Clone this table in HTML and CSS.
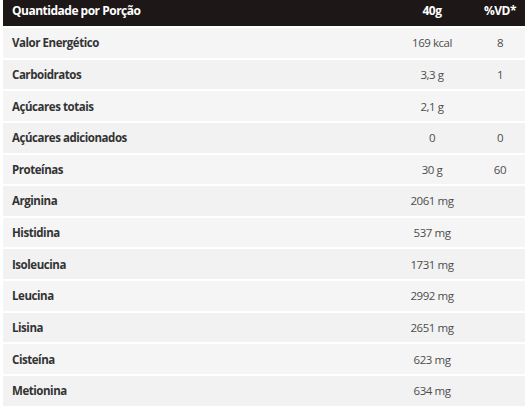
FILE: index.html
```html
<!DOCTYPE html>
<html lang="pt">
<head>
<meta charset="utf-8">
<link rel="stylesheet" href="styles.css">
</head>
<body>
<div class="table">
  <div class="row head">
    <div class="c-label">Quantidade por Porção</div>
    <div class="c-qty">40g</div>
    <div class="c-vd">%VD*</div>
  </div>
  <div class="row"><div class="c-label">Valor Energético</div><div class="c-qty">169 kcal</div><div class="c-vd">8</div></div>
  <div class="row alt"><div class="c-label">Carboidratos</div><div class="c-qty">3,3 g</div><div class="c-vd">1</div></div>
  <div class="row"><div class="c-label">Açúcares totais</div><div class="c-qty">2,1 g</div><div class="c-vd"></div></div>
  <div class="row alt"><div class="c-label">Açúcares adicionados</div><div class="c-qty">0</div><div class="c-vd">0</div></div>
  <div class="row"><div class="c-label">Proteínas</div><div class="c-qty">30 g</div><div class="c-vd">60</div></div>
  <div class="row alt"><div class="c-label">Arginina</div><div class="c-qty">2061 mg</div><div class="c-vd"></div></div>
  <div class="row"><div class="c-label">Histidina</div><div class="c-qty">537 mg</div><div class="c-vd"></div></div>
  <div class="row alt"><div class="c-label">Isoleucina</div><div class="c-qty">1731 mg</div><div class="c-vd"></div></div>
  <div class="row"><div class="c-label">Leucina</div><div class="c-qty">2992 mg</div><div class="c-vd"></div></div>
  <div class="row alt"><div class="c-label">Lisina</div><div class="c-qty">2651 mg</div><div class="c-vd"></div></div>
  <div class="row"><div class="c-label">Cisteína</div><div class="c-qty">623 mg</div><div class="c-vd"></div></div>
  <div class="row alt"><div class="c-label">Metionina</div><div class="c-qty">634 mg</div><div class="c-vd"></div></div>
</div>
</body>
</html>
```
FILE: styles.css
```css
html, body {
  margin: 0;
  padding: 0;
  background: #ffffff;
}
body {
  font-family: "Open Sans", "Liberation Sans", sans-serif;
}
.table {
  margin-left: 3px;
  width: 522px;
  display: flex;
  flex-direction: column;
  gap: 2px;
}
.row {
  display: grid;
  grid-template-columns: 1fr 86px 50px;
  align-items: center;
  height: 29.64px;
  background: #f5f5f5;
  font-size: 11.5px;
  letter-spacing: -0.45px;
  color: #4d4d4d;
}
.row.alt {
  background: #f2f2f2;
}
.row.head {
  height: 26px;
  background: #1d1817;
  color: #ffffff;
  font-size: 12px;
  font-weight: 700;
  letter-spacing: -0.5px;
  padding-bottom: 5px;
  box-sizing: border-box;
}
.c-label {
  padding-left: 9px;
  font-weight: 700;
  letter-spacing: -0.45px;
  color: #333333;
}
.head .c-label {
  letter-spacing: -0.5px;
  color: #ffffff;
}
.c-qty,
.c-vd {
  text-align: center;
}
```
